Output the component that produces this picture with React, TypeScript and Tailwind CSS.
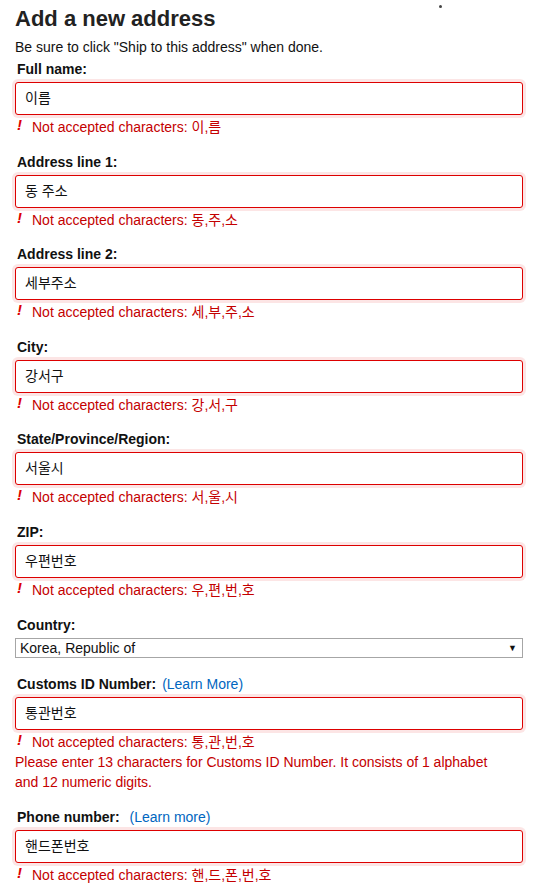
import React from "react";

const font = { fontFamily: '"Liberation Sans", Arial, "Noto Sans CJK KR", sans-serif' };

function ErrorLine({ chars }: { chars: string }) {
  return (
    <div className="mt-[3px] flex items-start leading-[19px] text-[14px] text-[#c40000]">
      <span className="w-[17px] pl-[2px] -mt-[3px] text-[15px] font-bold italic text-[#dd0000]">!</span>
      <span>Not accepted characters: {chars}</span>
    </div>
  );
}

function Field({
  label,
  value,
  chars,
  extra,
  first,
}: {
  label: React.ReactNode;
  value: string;
  chars: string;
  extra?: React.ReactNode;
  first?: boolean;
}) {
  return (
    <div className={first ? "mt-[3px]" : "mt-[15.6px]"}>
      <div className="pl-[2px] leading-[19px] text-[14px] font-bold text-[#111]">{label}</div>
      <div className="mt-[3px] flex h-[33px] w-[508px] items-center rounded-[3px] border border-[#dd0000] bg-white pl-[9px] text-[14px] text-[#111] shadow-[0_0_0_3px_rgba(221,0,0,0.1)]">
        {value}
      </div>
      <ErrorLine chars={chars} />
      {extra}
    </div>
  );
}

export default function App() {
  return (
    <div className="relative min-h-[892px] w-[547px] bg-white pl-[15px] text-[#111]" style={font}>
      <div className="absolute left-[439px] top-[5px] h-[3px] w-[3px] rounded-full bg-[#444]" />
      <h1 className="pt-[5px] text-[22px] font-bold leading-[28px] text-[#222]">Add a new address</h1>
      <p className="mt-[5px] text-[14px] leading-[19px] text-[#111]">
        Be sure to click "Ship to this address" when done.
      </p>
      <Field first label="Full name:" value="이름" chars="이,름" />
      <Field label="Address line 1:" value="동 주소" chars="동,주,소" />
      <Field label="Address line 2:" value="세부주소" chars="세,부,주,소" />
      <Field label="City:" value="강서구" chars="강,서,구" />
      <Field label="State/Province/Region:" value="서울시" chars="서,울,시" />
      <Field label="ZIP:" value="우편번호" chars="우,편,번,호" />

      <div className="mt-[15.6px]">
        <div className="pl-[2px] leading-[19px] text-[14px] font-bold text-[#111]">Country:</div>
        <div className="mt-[3.5px] flex h-[20px] w-[508px] items-center justify-between border border-[#a6a6a6] bg-white pl-[4px] pr-[5px] text-[14px] text-[#111]">
          <span>Korea, Republic of</span>
          <span className="text-[9px] leading-none">▼</span>
        </div>
      </div>

      <div className="mt-[17px]">
        <Field
          first
          label={
            <>
              Customs ID Number: <span className="ml-[2px] font-normal text-[#0066c0]">(Learn More)</span>
            </>
          }
          value="통관번호"
          chars="통,관,번,호"
          extra={
            <div className="w-[490px] text-[14px] leading-[20px] text-[#c40000]">
              Please enter 13 characters for Customs ID Number. It consists of 1 alphabet and 12 numeric digits.
            </div>
          }
        />
      </div>

      <div className="mt-[16px]">
        <Field
          first
          label={
            <>
              Phone number: <span className="ml-[6px] font-normal text-[#0066c0]">(Learn more)</span>
            </>
          }
          value="핸드폰번호"
          chars="핸,드,폰,번,호"
        />
      </div>
    </div>
  );
}
